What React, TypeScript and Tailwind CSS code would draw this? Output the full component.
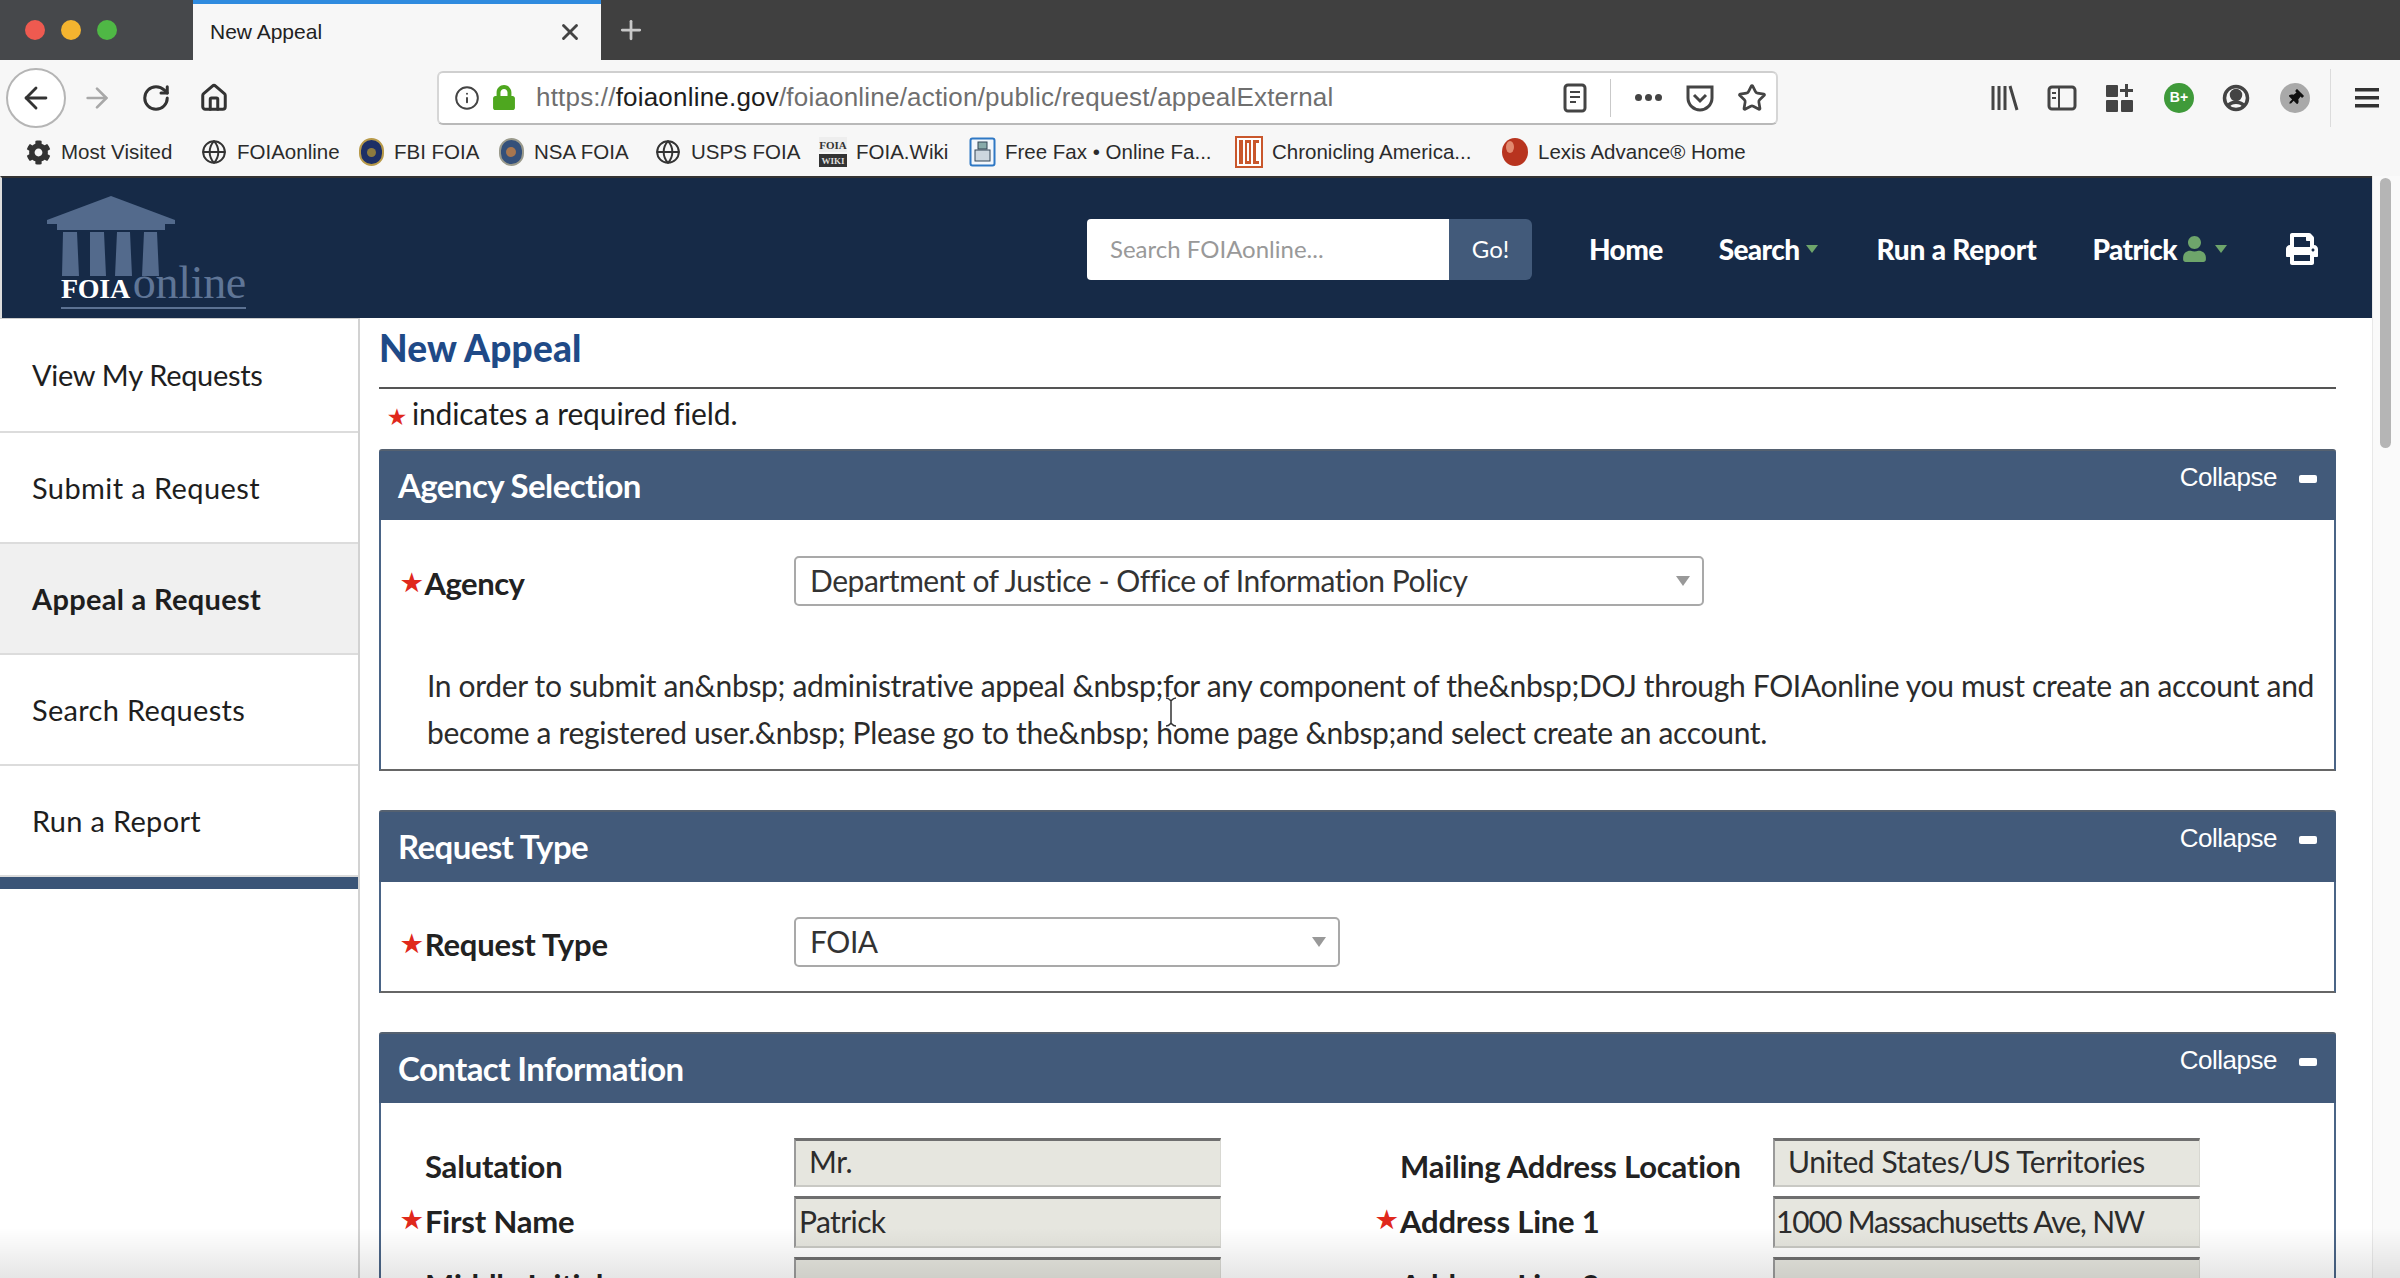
import React from 'react';
import { ArrowLeft, ArrowRight, RotateCw, Home, Info, Globe, Star, X, Plus } from 'lucide-react';
import { FaCog, FaLock, FaPrint, FaThumbtack, FaUser } from 'react-icons/fa';

const bookmarks = [
  { label: 'Most Visited', icon: 'gear', w: 'w-[176px]' },
  { label: 'FOIAonline', icon: 'globe', w: 'w-[157px]' },
  { label: 'FBI FOIA', icon: 'fbi', w: 'w-[140px]' },
  { label: 'NSA FOIA', icon: 'nsa', w: 'w-[157px]' },
  { label: 'USPS FOIA', icon: 'globe', w: 'w-[165px]' },
  { label: 'FOIA.Wiki', icon: 'wiki', w: 'w-[149px]' },
  { label: 'Free Fax • Online Fa...', icon: 'fax', w: 'w-[267px]' },
  { label: 'Chronicling America...', icon: 'loc', w: 'w-[266px]' },
  { label: 'Lexis Advance® Home', icon: 'lexis', w: 'w-[260px]' },
];

const BookmarkIcon = ({ kind }: { kind: string }) => {
  if (kind === 'gear') return <FaCog className="h-[25px] w-[25px] text-[#333]" />;
  if (kind === 'globe') return <Globe className="h-[26px] w-[26px] text-[#333]" strokeWidth={1.8} />;
  if (kind === 'fbi')
    return (
      <div className="flex h-[28px] w-[25px] items-center justify-center rounded-full border-2 border-[#b89a4a] bg-[#1d2f66]">
        <div className="h-[9px] w-[9px] rounded-full bg-[#8d7a3f]" />
      </div>
    );
  if (kind === 'nsa')
    return (
      <div className="flex h-[28px] w-[25px] items-center justify-center rounded-full border-2 border-[#9a9a8c] bg-[#34507a]">
        <div className="h-[10px] w-[10px] rounded-full bg-[#a8764f]" />
      </div>
    );
  if (kind === 'wiki')
    return (
      <svg width="28" height="30" viewBox="0 0 28 30">
        <rect x="0" y="0" width="28" height="15" fill="#eee" />
        <text x="14" y="12" textAnchor="middle" fontSize="11" fontWeight="bold" fontFamily="Liberation Serif" fill="#333">
          FOIA
        </text>
        <rect x="0" y="17" width="28" height="13" fill="#333" />
        <text x="14" y="27" textAnchor="middle" fontSize="9" fontWeight="bold" fontFamily="Liberation Serif" fill="#ddd">
          WIKI
        </text>
      </svg>
    );
  if (kind === 'fax')
    return (
      <svg width="27" height="30" viewBox="0 0 27 30">
        <rect x="1.5" y="1.5" width="24" height="27" rx="2" fill="#f3f7fc" stroke="#2f78c4" strokeWidth="2" />
        <rect x="9" y="5" width="9" height="7" fill="#8aa" stroke="#345" />
        <rect x="6" y="13" width="15" height="11" fill="#ccd6de" stroke="#345" />
      </svg>
    );
  if (kind === 'loc')
    return (
      <svg width="28" height="32" viewBox="0 0 28 32">
        <rect x="1" y="1" width="26" height="30" fill="#fff" stroke="#c9572c" strokeWidth="2" />
        <rect x="4" y="4" width="4" height="24" fill="#c9572c" />
        <rect x="10" y="4" width="6" height="24" fill="#c9572c" />
        <rect x="12" y="7" width="2" height="18" fill="#fff" />
        <rect x="18" y="4" width="6" height="24" fill="#c9572c" />
        <rect x="21" y="7" width="3" height="18" fill="#fff" />
      </svg>
    );
  return (
    <svg width="28" height="30" viewBox="0 0 28 30">
      <ellipse cx="14" cy="15" rx="13" ry="14" fill="#b8341f" />
      <ellipse cx="9" cy="10" rx="4" ry="6" fill="#e28a70" />
    </svg>
  );
};

const Star2 = ({ className }: { className: string }) => <span className={`font-['Liberation_Sans',sans-serif] font-bold text-[#e0281c] ${className}`}>★</span>;

const PanelHeader = ({ title, heightClass }: { title: string; heightClass: string }) => (
  <div className={`flex items-start justify-between rounded-t-[3px] border-t-2 border-[#556170] bg-[#425a7a] pl-[19px] pr-[19px] ${heightClass}`}>
    <h2 className="mt-[16px] font-['Lato',sans-serif] text-[33px] leading-[36px] font-bold tracking-[-0.6px] text-white">{title}</h2>
    <div className="mt-[10px] flex items-center gap-[22px] font-['Liberation_Sans',sans-serif] text-[26px] leading-[32px] tracking-[-0.5px] text-white">
      <span>Collapse</span>
      <span className="mt-[3px] h-[8px] w-[18px] rounded-[2px] bg-white" />
    </div>
  </div>
);

const SelectBox = ({ value, widthClass }: { value: string; widthClass: string }) => (
  <div className={`flex h-[50px] items-center justify-between rounded-[5px] border-2 border-[#a9a9a9] bg-white pl-[14px] pr-[12px] ${widthClass}`}>
    <span className="text-[30px] tracking-[-0.45px] text-[#333]">{value}</span>
    <span className="h-0 w-0 border-x-[7px] border-t-[10px] border-x-transparent border-t-[#999]" />
  </div>
);

const ReadOnlyField = ({ value, height, cls }: { value: string; height: string; cls: string }) => (
  <div className={`flex w-[427px] items-center border-t-[3px] border-r border-b-2 border-l-2 border-t-[#6f6f6f] border-r-[#d8d8d2] border-b-[#c9c9c4] border-l-[#9a9a9a] bg-[#e6e6df] pb-[3px] text-[30px] text-[#2c2c2c] ${height} ${cls}`}>
    {value}
  </div>
);

const Label = ({ text, req }: { text: string; req?: boolean }) => (
  <div className={`relative pl-[44px] text-[31px] font-bold tracking-[-0.2px] text-[#222] ${req ? 'mt-[2px]' : 'mt-[5px]'}`}>
    {req && <Star2 className="absolute top-[4px] left-[20px] text-[24px]" />}
    {text}
  </div>
);

const sideItems = [
  { label: 'View My Requests', cls: 'h-[114px] tracking-[-0.3px]' },
  { label: 'Submit a Request', cls: 'h-[111px] tracking-[0.4px]' },
  { label: 'Appeal a Request', cls: 'h-[111px] tracking-[0.3px] bg-[#f0f0f0] font-bold' },
  { label: 'Search Requests', cls: 'h-[111px] tracking-[0.3px]' },
  { label: 'Run a Report', cls: 'h-[111px] tracking-[0.3px]' },
];

const App: React.FC = () => {
  return (
    <div className="relative h-[1278px] w-[2400px] overflow-hidden bg-white font-['Lato',sans-serif]">
      {/* tab strip */}
      <div className="flex h-[60px] bg-[#404040]">
        <div className="flex w-[193px] items-center gap-[16px] bg-[#46484b] pl-[25px]">
          <span className="h-[20px] w-[20px] rounded-full bg-[#ee5a50]" />
          <span className="h-[20px] w-[20px] rounded-full bg-[#f4b42f]" />
          <span className="h-[20px] w-[20px] rounded-full bg-[#4fb845]" />
        </div>
        <div className="flex w-[408px] items-center justify-between border-t-[4px] border-[#2f8bdf] bg-[#f7f7f7] pl-[17px] pr-[18px] font-['Liberation_Sans',sans-serif] text-[21px] text-[#222]">
          <span>New Appeal</span>
          <X className="h-[26px] w-[26px] text-[#444]" strokeWidth={2.6} />
        </div>
        <div className="ml-[15px] flex items-center">
          <Plus className="h-[30px] w-[30px] text-[#c8c8c8]" strokeWidth={2.2} />
        </div>
      </div>

      {/* toolbar */}
      <div className="flex h-[68px] items-center bg-[#f7f7f7] pt-[7px]">
        <div className="ml-[6px] flex h-[60px] w-[60px] items-center justify-center rounded-full border-2 border-[#b5b5b5] bg-white">
          <ArrowLeft className="h-[34px] w-[34px] text-[#333]" strokeWidth={2} />
        </div>
        <ArrowRight className="ml-[15px] h-[32px] w-[32px] text-[#a8a8a8]" strokeWidth={2} />
        <RotateCw className="ml-[28px] h-[30px] w-[30px] text-[#333]" strokeWidth={2.4} />
        <Home className="ml-[28px] h-[30px] w-[30px] text-[#333]" strokeWidth={2.4} />
        <div className="ml-[208px] flex h-[54px] w-[1341px] shrink-0 items-center rounded-[6px] border-2 border-t-[#cfcfcf] border-r-[#d6d6d6] border-b-[#b9b9b9] border-l-[#d6d6d6] bg-white">
          <Info className="ml-[15px] h-[26px] w-[26px] text-[#444]" strokeWidth={1.8} />
          <FaLock className="ml-[13px] h-[25px] w-[22px] text-[#4ea71f]" />
          <div className="ml-[21px] w-[796px] whitespace-nowrap font-['Liberation_Sans',sans-serif] text-[26px] tracking-[0.2px] text-[#6f6f6f]">
            https://<span className="text-[#1d1d1d]">foiaonline.gov</span>/foiaonline/action/public/request/appealExternal
          </div>
          <svg className="ml-[230px]" width="26" height="30" viewBox="0 0 26 30" fill="none" stroke="#444" strokeWidth="3">
            <rect x="3" y="2" width="20" height="26" rx="3" />
            <path d="M8 9h10M8 14h10M8 19h6" strokeWidth="2" />
          </svg>
          <div className="ml-[22px] h-[38px] w-px bg-[#c9c9c9]" />
          <div className="ml-[24px] flex gap-[3px]">
            <span className="h-[7px] w-[7px] rounded-full bg-[#444]" />
            <span className="h-[7px] w-[7px] rounded-full bg-[#444]" />
            <span className="h-[7px] w-[7px] rounded-full bg-[#444]" />
          </div>
          <svg className="ml-[23px]" width="30" height="30" viewBox="0 0 30 30" fill="none" stroke="#444" strokeWidth="3">
            <path d="M3 4h24v11c0 7-6 12-12 12S3 22 3 15z" />
            <path d="M9 12l6 6 6-6" />
          </svg>
          <Star className="ml-[22px] h-[30px] w-[30px] text-[#444]" strokeWidth={2.2} />
        </div>
        {/* toolbar right icons */}
        <svg className="ml-[212px]" width="30" height="30" viewBox="0 0 30 30" stroke="#444" strokeWidth="3" fill="none">
          <path d="M3 3v24M9 3v24M15 3v24M20 3l7 24" />
        </svg>
        <svg className="ml-[27px]" width="30" height="28" viewBox="0 0 30 28" stroke="#444" strokeWidth="3" fill="none">
          <rect x="2" y="3" width="26" height="22" rx="3" />
          <path d="M12 3v22M5 9h4M5 14h4" strokeWidth="2" />
        </svg>
        <svg className="ml-[28px]" width="30" height="30" viewBox="0 0 30 30" fill="#444">
          <rect x="1" y="2" width="12" height="12" rx="1" />
          <rect x="1" y="17" width="12" height="12" rx="1" />
          <rect x="16" y="17" width="12" height="12" rx="1" />
          <path d="M20 1h3v5h5v3h-5v5h-3V9h-5V6h5z" />
        </svg>
        <div className="ml-[29px] flex h-[30px] w-[30px] items-center justify-center rounded-full bg-[#3f9a3a] font-['Liberation_Sans',sans-serif] text-[14px] font-bold text-white">B+</div>
        <svg className="ml-[28px]" width="28" height="28" viewBox="0 0 28 28" fill="none" stroke="#444" strokeWidth="3.5">
          <circle cx="14" cy="14" r="11.5" />
          <circle cx="14" cy="11" r="4.5" fill="#444" />
          <path d="M6 22c3-5 13-5 16 0" />
        </svg>
        <div className="ml-[30px] flex h-[30px] w-[30px] items-center justify-center rounded-full bg-[#a9a9a9]">
          <FaThumbtack className="h-[16px] w-[16px] rotate-45 text-[#111]" />
        </div>
        <div className="ml-[20px] h-[58px] w-px bg-[#dcdcdc]" />
        <svg className="ml-[24px]" width="24" height="24" viewBox="0 0 24 24" fill="#333">
          <rect y="2" width="24" height="3.5" />
          <rect y="10" width="24" height="3.5" />
          <rect y="18" width="24" height="3.5" />
        </svg>
      </div>

      {/* bookmarks */}
      <div className="flex h-[48px] items-center bg-[#f7f7f7] pl-[24px] font-['Liberation_Sans',sans-serif] text-[20.5px] text-[#2b2b2b]">
        {bookmarks.map((b, i) => (
          <div key={i} className={`flex shrink-0 items-center gap-[9px] ${b.w}`}>
            <div className="flex w-[28px] shrink-0 justify-center">
              <BookmarkIcon kind={b.icon} />
            </div>
            <span className="whitespace-nowrap">{b.label}</span>
          </div>
        ))}
      </div>

      <div className="flex h-[1102px]">
        <div className="w-[2372px]">
          {/* site header */}
          <header className="flex h-[142px] items-center border-t-2 border-l-2 border-t-[#333] border-l-[#ddd] bg-[#162a47] pt-[2px]">
            <div className="relative ml-[45px] h-[112px] w-[200px]">
              <svg className="absolute top-[3px] left-0" width="128" height="80" viewBox="0 0 128 80" fill="#536a8c">
                <path d="M64 0L128 24v4H118v6H10v-6H0v-4z" />
                <path d="M16 36h14l2 44H15zM43 36h14l2 44H43zM70 36h13l2 44H68zM97 36h13l2 44H95z" />
              </svg>
              <div className="absolute top-[72px] left-[14px] flex items-baseline border-b-[2px] border-[#5b7192] font-['Liberation_Serif',serif] leading-[36px]">
                <span className="text-[28px] font-bold tracking-[-0.3px] text-white">FOIA</span>
                <span className="ml-[3px] text-[46px] tracking-[-0.3px] text-[#5f7596]">online</span>
              </div>
            </div>
            <div className="ml-[840px] flex h-[61px] w-[445px]">
              <div className="flex w-[362px] items-center rounded-l-[4px] bg-white pl-[23px] text-[24px] text-[#999]">Search FOIAonline...</div>
              <div className="flex w-[83px] items-center justify-center rounded-r-[6px] bg-[#425a7a] text-[24px] text-white">Go!</div>
            </div>
            <nav className="ml-[57px] flex items-center font-['Lato',sans-serif] text-[28px] font-black tracking-[-0.6px] text-white">
              <span>Home</span>
              <span className="ml-[56px]">Search</span>
              <span className="ml-[7px] h-0 w-0 border-x-[6px] border-t-[8px] border-x-transparent border-t-[#6ea56b]" />
              <span className="ml-[58px] tracking-[-0.2px]">Run a Report</span>
              <span className="ml-[56px]">Patrick</span>
              <FaUser className="ml-[6px] h-[26px] w-[23px] text-[#6ea56b]" />
              <span className="ml-[9px] h-0 w-0 border-x-[6px] border-t-[8px] border-x-transparent border-t-[#6ea56b]" />
              <FaPrint className="ml-[59px] h-[32px] w-[32px] text-white" />
            </nav>
          </header>

          <div className="flex">
            {/* sidebar */}
            <aside className="h-[960px] w-[360px] shrink-0 border-r-2 border-[#d2d2d2]">
              <div className="border-t border-[#ccc]">
                {sideItems.map((item) => (
                  <div key={item.label} className={`flex items-center border-b-2 border-[#dcdcdc] pl-[32px] text-[29px] text-[#1e1e1e] ${item.cls}`}>
                    {item.label}
                  </div>
                ))}
              </div>
              <div className="h-[12px] bg-[#3a5477]" />
            </aside>

            {/* main */}
            <main className="ml-[19px] w-[1957px]">
              <h1 className="flex h-[71px] items-center border-b-2 border-[#555] pb-[10px] text-[37px] leading-none font-black tracking-[0.2px] text-[#1f4a87]">New Appeal</h1>
              <div className="flex h-[60px] items-center pb-[12px] pl-[9px] text-[30px] tracking-[-0.12px] text-[#1e1e1e]">
                <Star2 className="mt-[8px] mr-[6px] text-[20px]" />
                indicates a required field.
              </div>

              <section>
                <PanelHeader title="Agency Selection" heightClass="h-[71px]" />
                <div className="h-[251px] border-x-2 border-b-2 border-x-[#4a6486] border-b-[#666] pt-[35px]">
                  <div className="flex items-center">
                    <div className="flex w-[413px] items-center pt-[5px] pl-[20px] text-[31px] font-bold tracking-[-0.5px] text-[#222]">
                      <Star2 className="mr-[2px] text-[24px]" />
                      Agency
                    </div>
                    <SelectBox value="Department of Justice - Office of Information Policy" widthClass="w-[910px]" />
                  </div>
                  <p className="mt-[55px] pl-[46px] text-[30px] leading-[47px] tracking-[-0.33px] text-[#2b2b2b]">
                    In order to submit an&amp;nbsp; administrative appeal &amp;nbsp;for any component of the&amp;nbsp;DOJ through FOIAonline you must create an account and
                    <br />
                    become a registered user.&amp;nbsp; Please go to the&amp;nbsp; home page &amp;nbsp;and select create an account.
                  </p>
                </div>
              </section>

              <section className="mt-[39px]">
                <PanelHeader title="Request Type" heightClass="h-[72px]" />
                <div className="h-[111px] border-x-2 border-b-2 border-x-[#4a6486] border-b-[#666] pt-[34px]">
                  <div className="flex items-center">
                    <div className="flex w-[413px] items-center pt-[5px] pl-[20px] text-[31px] font-bold tracking-[-0.2px] text-[#222]">
                      <Star2 className="mr-[2px] text-[24px]" />
                      Request Type
                    </div>
                    <SelectBox value="FOIA" widthClass="w-[546px]" />
                  </div>
                </div>
              </section>

              <section className="mt-[39px]">
                <PanelHeader title="Contact Information" heightClass="h-[71px]" />
                <div className="h-[300px] border-x-2 border-x-[#4a6486] pt-[35px]">
                  <div className="grid grid-cols-[413px_562px_417px_auto] grid-rows-[58px_61px_61px] items-start">
                    <Label text="Salutation" />
                    <ReadOnlyField value="Mr." height="h-[49px]" cls="pl-[13px] tracking-[-0.45px]" />
                    <Label text="Mailing Address Location" />
                    <ReadOnlyField value="United States/US Territories" height="h-[49px]" cls="pl-[13px] tracking-[-0.45px]" />
                    <Label text="First Name" req />
                    <ReadOnlyField value="Patrick" height="h-[52px]" cls="pl-[3px] tracking-[-0.6px]" />
                    <Label text="Address Line 1" req />
                    <ReadOnlyField value="1000 Massachusetts Ave, NW" height="h-[52px]" cls="pl-[1px] tracking-[-1.1px]" />
                    <Label text="Middle Initial" />
                    <ReadOnlyField value="" height="h-[52px]" cls="" />
                    <Label text="Address Line 2" />
                    <ReadOnlyField value="" height="h-[52px]" cls="" />
                  </div>
                </div>
              </section>
            </main>
          </div>
        </div>

        {/* scrollbar */}
        <div className="h-full w-[28px] border-l border-[#e8e8e8] bg-[#fafafa] pt-[2px] pl-[7px]">
          <div className="h-[270px] w-[11px] rounded-full bg-[#b5b5b5]" />
        </div>
      </div>

      {/* text cursor over the paragraph */}
      <svg className="absolute top-[697px] left-[1165px]" width="12" height="30" viewBox="0 0 12 30" fill="none" stroke="#333" strokeWidth="1.5">
        <path d="M1 1c3 0 4 2 5 3 1-1 2-3 5-3M6 4v22M1 29c3 0 4-2 5-3 1 1 2 3 5 3" />
      </svg>
      {/* faded bottom edge of the frame */}
      <div className="pointer-events-none absolute right-0 bottom-0 left-0 h-[50px] bg-gradient-to-b from-transparent to-black/10" />
    </div>
  );
};

export default App;
